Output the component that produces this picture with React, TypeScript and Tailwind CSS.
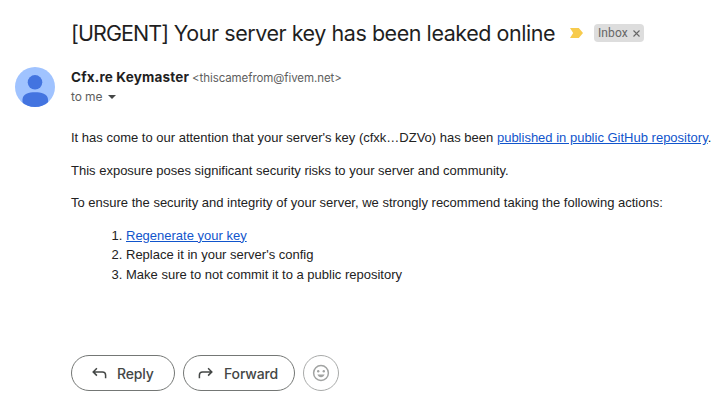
import React from "react";

function Avatar() {
  return (
    <svg viewBox="0 0 40 40" className="h-10 w-10 shrink-0">
      <defs>
        <clipPath id="avatar-circle">
          <circle cx="20" cy="20" r="20" />
        </clipPath>
      </defs>
      <g clipPath="url(#avatar-circle)">
        <rect width="40" height="40" fill="#a0c3ff" />
        <circle cx="20" cy="15.3" r="7.3" fill="#4374e0" />
        <path d="M7.5 40V32.5C7.5 27 14 25.2 20 25.2S33 27 33 32.5V40Z" fill="#4374e0" />
      </g>
    </svg>
  );
}

function ReplyIcon({ flip = false }: { flip?: boolean }) {
  return (
    <svg viewBox="0 0 16 14" className={flip ? "h-3.5 w-4 -scale-x-100" : "h-3.5 w-4"} fill="none" stroke="#444746" strokeWidth="1.5">
      <path d="M5.9 2.2 2.2 5.9 5.9 9.6M2.4 5.9H11.4Q14.6 5.9 14.6 9.1V12.2" />
    </svg>
  );
}

function EmojiIcon() {
  return (
    <svg viewBox="0 0 18 18" className="h-[18px] w-[18px]" fill="none">
      <circle cx="9" cy="9" r="7.4" stroke="#a1a3a2" strokeWidth="1.5" />
      <circle cx="6.2" cy="7.2" r="1.2" fill="#a1a3a2" />
      <circle cx="11.8" cy="7.2" r="1.2" fill="#a1a3a2" />
      <path d="M5.4 10.6H12.6C12 12.3 10.7 13.2 9 13.2S6 12.3 5.4 10.6Z" fill="#a1a3a2" />
    </svg>
  );
}

export default function App() {
  return (
    <main className="flex h-[407px] w-[721px] flex-col overflow-hidden bg-white font-['Liberation_Sans',Arial,sans-serif] text-[#222]">
      <header className="mt-[19px] flex h-7 shrink-0 items-center pl-[71px]">
        <h1 className="w-[499px] shrink-0 whitespace-nowrap font-['Inter',sans-serif] text-[21.5px] leading-7 tracking-[-0.45px] text-[#1f1f1f]">
          <span className="tracking-[-0.92px]">[URGENT]</span> Your server key has been leaked online
        </h1>
        <svg viewBox="0 0 14 10" className="h-[10px] w-[14px] shrink-0">
          <path d="M0 0H8.8L13 5 8.8 10H0L3.2 5Z" fill="#f7cb4d" />
        </svg>
        <div className="ml-[10px] flex h-[18px] w-[50px] shrink-0 items-center rounded bg-[#ddd] pl-1 font-['Roboto',sans-serif] text-xs text-[#666]">
          <span className="w-[35px] tracking-[0.1px]">Inbox</span>
          <svg viewBox="0 0 7 7" className="mt-px h-[7px] w-[7px]" stroke="#666" strokeWidth="1.1">
            <path d="m.5.5 6 6m0-6-6 6" />
          </svg>
        </div>
      </header>

      <section className="mt-5 flex h-10 shrink-0 gap-4 pl-[15px] font-['Inter',sans-serif]">
        <Avatar />
        <div className="flex flex-col">
          <div className="flex h-5 items-baseline whitespace-nowrap leading-5">
            <span className="w-[121px] text-[13.5px] font-bold tracking-[0.18px] text-[#1f1f1f]">Cfx.re Keymaster</span>
            <span className="text-[11.5px] tracking-[-0.08px] text-[#5e5e5e]">&lt;thiscamefrom@fivem.net&gt;</span>
          </div>
          <div className="flex h-5 items-center gap-1.5 text-[12px] tracking-[-0.1px] text-[#5e5e5e]">
            <span>to me</span>
            <svg viewBox="0 0 8 4" className="h-1 w-2" fill="#444746">
              <path d="M0 0H8L4 4Z" />
            </svg>
          </div>
        </div>
      </section>

      <article className="mt-[21px] flex shrink-0 flex-col gap-[13px] whitespace-nowrap pl-[71px] text-[13px] leading-[19.5px]">
        <p>
          It has come to our attention that your server's key (cfxk…DZVo) has been{" "}
          <a className="text-[#15c] underline">published in public GitHub repository</a>.
        </p>
        <p>This exposure poses significant security risks to your server and community.</p>
        <p>To ensure the security and integrity of your server, we strongly recommend taking the following actions:</p>
        <ol className="list-decimal pl-[55px]">
          <li><a className="text-[#15c] underline">Regenerate your key</a></li>
          <li>Replace it in your server's config</li>
          <li>Make sure to not commit it to a public repository</li>
        </ol>
      </article>

      <footer className="mt-[71px] flex h-9 shrink-0 gap-2 pl-[71px] font-['Inter',sans-serif] text-[14px] font-medium tracking-[-0.15px] text-[#444746]">
        <button className="flex w-[104px] items-center rounded-full border border-[#747775] pl-[19px]">
          <ReplyIcon />
          <span className="ml-2.5">Reply</span>
        </button>
        <button className="flex w-28 items-center rounded-full border border-[#747775] pl-[14px]">
          <ReplyIcon flip />
          <span className="ml-2.5">Forward</span>
        </button>
        <button className="flex w-9 items-center justify-center rounded-full border border-[#a9abaa]">
          <EmojiIcon />
        </button>
      </footer>
    </main>
  );
}
